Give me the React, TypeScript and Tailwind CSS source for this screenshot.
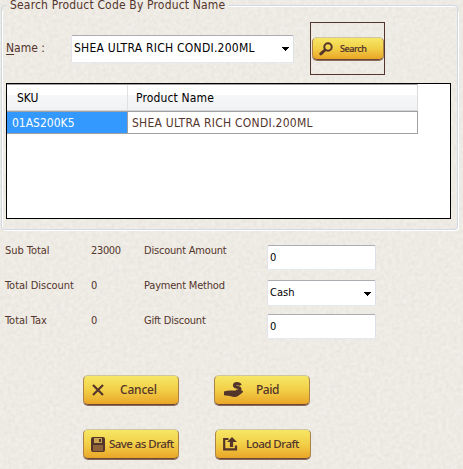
import React from "react";

const tahoma = "font-['DejaVu_Sans_Condensed','DejaVu_Sans',sans-serif] [font-stretch:condensed]";

function Paper() {
  return (
    <svg className="absolute inset-0 -z-10 h-full w-full" aria-hidden="true">
      <filter id="paper" colorInterpolationFilters="sRGB">
        <feTurbulence type="fractalNoise" baseFrequency="0.26" numOctaves="2" seed="4" />
        <feColorMatrix values="0.06 0 0 0 0.902  0.06 0 0 0 0.889  0.07 0 0 0 0.859  0 0 0 0 1" />
      </filter>
      <rect width="100%" height="100%" filter="url(#paper)" />
    </svg>
  );
}

function Arrow() {
  return (
    <svg className="h-[4px] w-[7px] shrink-0" viewBox="0 0 7 4" shapeRendering="crispEdges">
      <path d="M0 0h7v1H6v1H5v1H4v1H3V3H2V2H1V1H0z" fill="#000" />
    </svg>
  );
}

const field =
  "flex items-center rounded-[2px] border border-t-[#abadb3] border-r-[#dbdfe6] border-b-[#e3e9ef] border-l-[#e2e3ea] bg-white text-black";

const button =
  "flex items-center rounded-[5px] border border-t-[#cfc6a0] border-r-[#a9824c] border-b-[#6b4537] border-l-[#a9824c] bg-linear-to-b from-[#f6e765] via-[#f2cf47] to-[#e9a626] text-[#54352b] shadow-[0_1px_0_#8a6a5a]";

const buttonText = "font-['Noto_Sans',sans-serif] font-medium whitespace-nowrap";

function SearchIcon() {
  return (
    <svg className="h-[14px] w-[14px]" viewBox="0 0 14 14" fill="none" stroke="#54352b">
      <circle cx="9" cy="5" r="3.7" strokeWidth="2" />
      <path d="M6 8L1.8 11.8" strokeWidth="3" strokeLinecap="round" />
    </svg>
  );
}

function CancelIcon() {
  return (
    <svg className="h-[12px] w-[12px]" viewBox="0 0 12 12" fill="none" stroke="#54352b" strokeWidth="2.2">
      <path d="M1 1L11 11M11 1L1 11" />
    </svg>
  );
}

function PaidIcon() {
  return (
    <svg className="h-[16px] w-[20px]" viewBox="0 0 20 16" fill="none">
      <path d="M0 9.6Q4 8.2 8 8.6L18 8.4Q20 9 18 11L14 14Q11 15.8 6 14L0 13.2Z" fill="#54352b" />
      <path d="M16.3 3.4Q15.5 1.6 13 1.6Q10.3 1.8 10.4 3.7Q10.8 5 13 5.2Q16.2 5.6 16 7.5Q15.5 9.3 12 9.3" stroke="#54352b" strokeWidth="3" />
    </svg>
  );
}

function SaveIcon() {
  return (
    <svg className="h-[15px] w-[14px]" viewBox="0 0 14 15">
      <rect width="14" height="15" rx="2" fill="#54352b" />
      <rect x="3" y="1" width="8" height="5" fill="#c9a552" />
      <rect x="8" y="2" width="2" height="3" fill="#54352b" />
      <rect x="2" y="8" width="10" height="6" fill="#8e6339" />
    </svg>
  );
}

function LoadIcon() {
  return (
    <svg className="h-[14px] w-[15px]" viewBox="0 0 15 14" fill="none" stroke="#54352b" strokeWidth="2.2">
      <path d="M5.5 2H1.2V12.4H13V8.5" />
      <path d="M8.5 10V4" strokeWidth="3.2" />
      <path d="M4 5L9 0L14 5Z" fill="#54352b" stroke="none" />
    </svg>
  );
}

const rows = [
  { left: "Sub Total", value: "23000", right: "Discount Amount" },
  { left: "Total Discount", value: "0", right: "Payment Method" },
  { left: "Total Tax", value: "0", right: "Gift Discount" },
];

export default function App() {
  return (
    <main className={`relative isolate h-[469px] w-[463px] overflow-hidden bg-[#edeae2] text-[#54352b] ${tahoma}`}>
      <Paper />
      <div className="flex h-[231px] flex-col">
        <div className="flex h-[11px] items-start pl-px">
          <div className="mt-[5px] h-[6px] w-[6px] rounded-tl-[4px] border-t border-l border-[#d0dae4]" />
          <div className="-mt-[3px] w-[221px] pl-[3px] text-[12px] leading-[16px] tracking-[0.17px] whitespace-nowrap">
            Search Product Code By Product Name
          </div>
          <div className="mt-[5px] h-[6px] w-[230px] rounded-tr-[4px] border-t border-r border-[#d0dae4] shadow-[inset_0_1px_0_#fff]" />
        </div>
        <div className="ml-px h-[219px] w-[457px] rounded-b-[4px] border-x border-b border-[#d0dae4] pl-[4px] shadow-[1px_1px_0_#fff,inset_1px_0_0_#fff]">
          <div className="flex h-[72px] items-start">
            <div className="mt-[29px] w-[65px] text-[12px] leading-[16px]">
              <span className="underline underline-offset-2">N</span>ame :
            </div>
            <div className={`mt-[24px] h-[28px] w-[223px] justify-between pr-[4px] pl-[2px] text-[12px] ${field}`}>
              <span className="mb-[2px] tracking-[0.25px] whitespace-nowrap">SHEA ULTRA RICH CONDI.200ML</span>
              <Arrow />
            </div>
            <div className="mt-[11px] ml-[16px] flex h-[53px] w-[75px] items-center border border-[#54352b] pl-px">
              <button className={`h-[23px] w-[72px] pl-[6px] ${button}`}>
                <SearchIcon />
                <span className={`ml-[7px] text-[9px] tracking-[-0.4px] [-webkit-text-stroke:0.2px_#54352b] ${buttonText}`}>Search</span>
              </button>
            </div>
          </div>
          <div className="h-[136px] w-[445px] border border-black bg-white text-[12px] leading-[16px]">
            <div className="flex h-[27px] w-[411px] items-center border-t border-r border-b border-t-[#a0a0a0] border-r-[#dcdcdc] border-b-[#d5d5d5] bg-linear-to-b from-white from-40% via-[#f6f7f9] via-41% to-[#f1f2f3] text-black">
              <div className="flex h-full w-[121px] items-center border-r border-[#dfe2e5] pl-[10px]">SKU</div>
              <div className="pl-[8px] tracking-[0.15px]">Product Name</div>
            </div>
            <div className="flex h-[23px] w-[411px] border-y border-r border-[#a0a0a0]">
              <div className="flex w-[121px] items-center border-r border-[#a0a0a0] bg-[#3399ff] pl-[5px] text-white">01AS200K5</div>
              <div className="flex items-center pl-[4px] tracking-[0.25px]">SHEA ULTRA RICH CONDI.200ML</div>
            </div>
          </div>
        </div>
      </div>
      <div className="flex pl-[5px]">
        <div className="pt-[2px] text-[11px] leading-[35px]">
          {rows.map((r) => (
            <div key={r.left} className="flex h-[35px] whitespace-nowrap">
              <span className="w-[86px] tracking-[-0.05px]">{r.left}</span>
              <span className="w-[53px] tracking-[-0.35px]">{r.value}</span>
              <span className="w-[123px] tracking-[-0.2px]">{r.right}</span>
            </div>
          ))}
        </div>
        <div className="flex flex-col pt-[14px] text-[11px]">
          <div className={`h-[25px] w-[109px] pt-[2px] pl-[2px] ${field}`}>0</div>
          <div className={`mt-[10px] h-[26px] w-[109px] justify-between pt-px pr-[4px] pl-[2px] ${field}`}>
            <span>Cash</span>
            <Arrow />
          </div>
          <div className={`mt-[8px] h-[25px] w-[109px] pt-[2px] pl-[2px] ${field}`}>0</div>
        </div>
      </div>
      <div className="mt-[36px] ml-[83px] flex flex-col gap-[24px] text-[12px]">
        <div className="flex gap-[35px]">
          <button className={`h-[30px] w-[96px] pl-[8px] ${button}`}>
            <CancelIcon />
            <span className={`ml-[16px] tracking-[-0.2px] ${buttonText}`}>Cancel</span>
          </button>
          <button className={`h-[30px] w-[96px] pl-[9px] ${button}`}>
            <PaidIcon />
            <span className={`ml-[12px] tracking-[-0.5px] ${buttonText}`}>Paid</span>
          </button>
        </div>
        <div className="flex gap-[36px]">
          <button className={`h-[30px] w-[96px] pl-[7px] ${button}`}>
            <SaveIcon />
            <span className={`ml-[4px] text-[11.5px] tracking-[-0.55px] ${buttonText}`}>Save as Draft</span>
          </button>
          <button className={`h-[30px] w-[96px] pl-[7px] ${button}`}>
            <LoadIcon />
            <span className={`ml-[8px] text-[11.5px] tracking-[-0.5px] ${buttonText}`}>Load Draft</span>
          </button>
        </div>
      </div>
    </main>
  );
}
